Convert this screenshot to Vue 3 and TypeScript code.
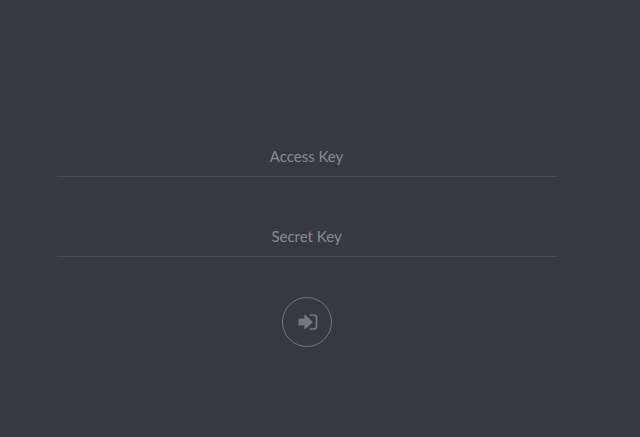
<script setup lang="ts">
import { ref } from 'vue'

const accessKey = ref('')
const secretKey = ref('')
</script>

<template>
  <main class="login">
    <form class="form" @submit.prevent>
      <input v-model="accessKey" class="field" type="text" placeholder="Access Key" />
      <input v-model="secretKey" class="field" type="password" placeholder="Secret Key" />
      <button class="submit" type="submit" aria-label="Sign in">
        <svg class="icon" viewBox="0 0 20 16">
          <path class="arrow" d="M1.2 4.6H6.4V1.4Q6.4 0 7.5 1L14.4 7.5Q14.9 8 14.4 8.5L7.5 15Q6.4 16 6.4 14.6V11.4H1.2Q.5 11.4 .5 10.7V5.3Q.5 4.6 1.2 4.6Z" />
          <path class="door" d="M12.4 1H15.8Q18.5 1 18.5 3.8V12.2Q18.5 15 15.8 15H12.4" />
        </svg>
      </button>
    </form>
  </main>
</template>

<style>
body {
  margin: 0;
  background: #353a41;
}
</style>

<style scoped>
.login {
  box-sizing: border-box;
  height: 437px;
  padding: 137px 0 0 57px;
  background: #353a41;
  overflow: hidden;
}
.form {
  display: flex;
  flex-direction: column;
  align-items: center;
  width: 500px;
}
.field {
  box-sizing: border-box;
  width: 100%;
  height: 40px;
  margin: 0 0 40px;
  padding: 0 1px 2px 0;
  border: 0;
  border-bottom: 1px solid #4c4e4f;
  outline: 0;
  background: transparent;
  color: #8a8a8a;
  font: 15px Lato, sans-serif;
  text-align: center;
}
.field::placeholder {
  color: #8a8a8a;
  opacity: 1;
}
.submit {
  display: flex;
  align-items: center;
  justify-content: center;
  box-sizing: border-box;
  width: 50px;
  height: 50px;
  padding: 0 0 0 1px;
  border: 1px solid #777777;
  border-radius: 50%;
  background: transparent;
}
.icon {
  width: 20px;
  height: 16px;
}
.arrow {
  fill: #777879;
}
.door {
  fill: none;
  stroke: #777879;
  stroke-width: 1.7;
  stroke-linecap: round;
}
</style>
